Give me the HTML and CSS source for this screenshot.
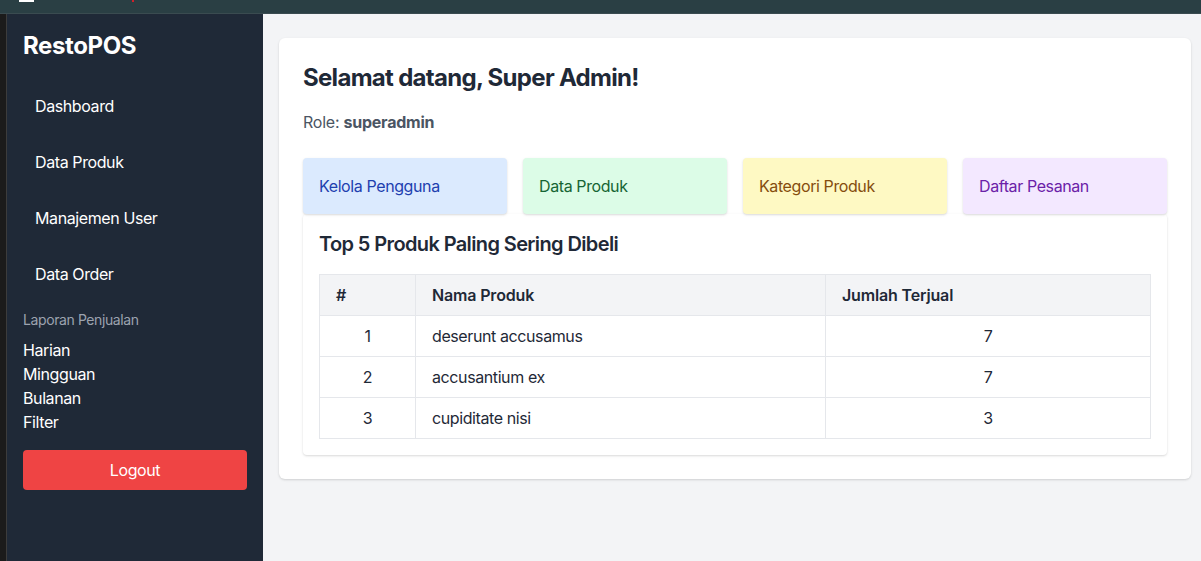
FILE: index.html
```html
<!DOCTYPE html>
<html lang="id">
<head>
<meta charset="utf-8">
<title>RestoPOS</title>
<link rel="stylesheet" href="styles.css">
</head>
<body>
<div class="chrome">
  <span class="chrome-icon"></span>
  <span class="chrome-dot"></span>
</div>
<div class="shell">
  <div class="edge"></div>
  <aside class="sidebar">
    <h1 class="brand">RestoPOS</h1>
    <nav class="nav">
      <a class="nav-item">Dashboard</a>
      <a class="nav-item">Data Produk</a>
      <a class="nav-item">Manajemen User</a>
      <a class="nav-item">Data Order</a>
    </nav>
    <div class="section-label">Laporan Penjualan</div>
    <ul class="report-list">
      <li>Harian</li>
      <li>Mingguan</li>
      <li>Bulanan</li>
      <li>Filter</li>
    </ul>
    <button class="logout">Logout</button>
  </aside>
  <main class="main">
    <section class="card">
      <h2 class="welcome">Selamat datang, Super Admin!</h2>
      <p class="role">Role: <strong>superadmin</strong></p>
      <div class="quick-grid">
        <a class="quick quick-blue">Kelola Pengguna</a>
        <a class="quick quick-green">Data Produk</a>
        <a class="quick quick-yellow">Kategori Produk</a>
        <a class="quick quick-purple">Daftar Pesanan</a>
      </div>
      <div class="panel">
        <h3 class="panel-title">Top 5 Produk Paling Sering Dibeli</h3>
        <table class="table">
          <thead>
            <tr>
              <th class="col-no">#</th>
              <th class="col-name">Nama Produk</th>
              <th>Jumlah Terjual</th>
            </tr>
          </thead>
          <tbody>
            <tr><td class="center">1</td><td>deserunt accusamus</td><td class="center">7</td></tr>
            <tr><td class="center">2</td><td>accusantium ex</td><td class="center">7</td></tr>
            <tr><td class="center">3</td><td>cupiditate nisi</td><td class="center">3</td></tr>
          </tbody>
        </table>
      </div>
    </section>
  </main>
</div>
</body>
</html>
```

FILE: styles.css
```css
* { box-sizing: border-box; }

html, body {
  margin: 0;
  height: 100%;
}

body {
  font-family: Inter, "Noto Sans", "Liberation Sans", sans-serif;
  font-size: 16px;
  line-height: 24px;
  letter-spacing: -0.025em;
  color: #1f2937;
  display: flex;
  flex-direction: column;
  overflow: hidden;
}

.chrome {
  height: 14px;
  flex: none;
  background: #2a3f44;
  border-bottom: 1px solid #3a4b50;
  display: flex;
  align-items: flex-start;
  padding-left: 19px;
}

.chrome-icon {
  width: 15px;
  height: 2px;
  background: #ffffff;
}

.chrome-dot {
  width: 2px;
  height: 2px;
  margin-left: 98px;
  background: #d0202a;
}

.shell {
  flex: 1;
  display: flex;
  min-height: 0;
}

.edge {
  width: 7px;
  flex: none;
  background: #1b1b1b;
  border-right: 1px solid #3c3c3c;
}

.sidebar {
  width: 256px;
  flex: none;
  background: #1f2937;
  color: #ffffff;
  padding: 16px 16px;
}

.brand {
  margin: 0 0 16px;
  font-size: 24px;
  line-height: 32px;
  font-weight: 700;
}

.nav {
  display: flex;
  flex-direction: column;
}

.nav-item {
  display: block;
  padding: 16px 12px;
  line-height: 24px;
  color: #ffffff;
}

.section-label {
  margin-top: 8px;
  font-size: 14px;
  line-height: 20px;
  color: #9ca3af;
}

.report-list {
  list-style: none;
  margin: 8px 0 0;
  padding: 0;
}

.report-list li {
  line-height: 24px;
}

.logout {
  display: block;
  width: 100%;
  margin-top: 16px;
  height: 40px;
  border: none;
  border-radius: 4px;
  background: #ef4444;
  color: #ffffff;
  font-family: inherit;
  font-size: 16px;
  letter-spacing: inherit;
}

.main {
  flex: 1;
  background: #f3f4f6;
  padding: 24px 10px 24px 16px;
}

.card {
  background: #ffffff;
  border-radius: 6px;
  box-shadow: 0 1px 3px rgba(0, 0, 0, 0.1), 0 1px 2px rgba(0, 0, 0, 0.06);
  padding: 24px;
}

.welcome {
  margin: 0 0 16px;
  font-size: 24px;
  line-height: 32px;
  font-weight: 700;
  letter-spacing: -0.029em;
  color: #1f2937;
}

.role {
  margin: 0 0 24px;
  color: #4b5563;
  letter-spacing: -0.015em;
}

.role strong {
  font-weight: 700;
}

.quick-grid {
  display: grid;
  grid-template-columns: repeat(4, 1fr);
  gap: 16px;
}

.quick {
  display: block;
  padding: 16px;
  border-radius: 4px;
  box-shadow: 0 1px 3px rgba(0, 0, 0, 0.1), 0 1px 2px rgba(0, 0, 0, 0.06);
}

.quick-blue { background: #dbeafe; color: #1e40af; }
.quick-green { background: #dcfce7; color: #166534; }
.quick-yellow { background: #fef9c3; color: #854d0e; }
.quick-purple { background: #f3e8ff; color: #6b21a8; }

.panel {
  background: #ffffff;
  border-radius: 4px;
  box-shadow: 0 1px 3px rgba(0, 0, 0, 0.1), 0 1px 2px rgba(0, 0, 0, 0.06);
  padding: 16px;
}

.panel-title {
  margin: 0 0 16px;
  font-size: 20px;
  line-height: 28px;
  font-weight: 600;
  letter-spacing: -0.031em;
  color: #1f2937;
}

.table {
  width: 100%;
  border-collapse: collapse;
  border: 1px solid #e5e7eb;
}

.table th,
.table td {
  border: 1px solid #e5e7eb;
  padding: 8px 16px;
  text-align: left;
  height: 41px;
}

.table thead {
  background: #f3f4f6;
}

.table th {
  font-weight: 600;
  letter-spacing: -0.01em;
  color: #1f2937;
}

.table td {
  color: #1f2937;
}

.col-no { width: 96px; }
.col-name { width: 410px; }

.table td.center {
  text-align: center;
}
```
